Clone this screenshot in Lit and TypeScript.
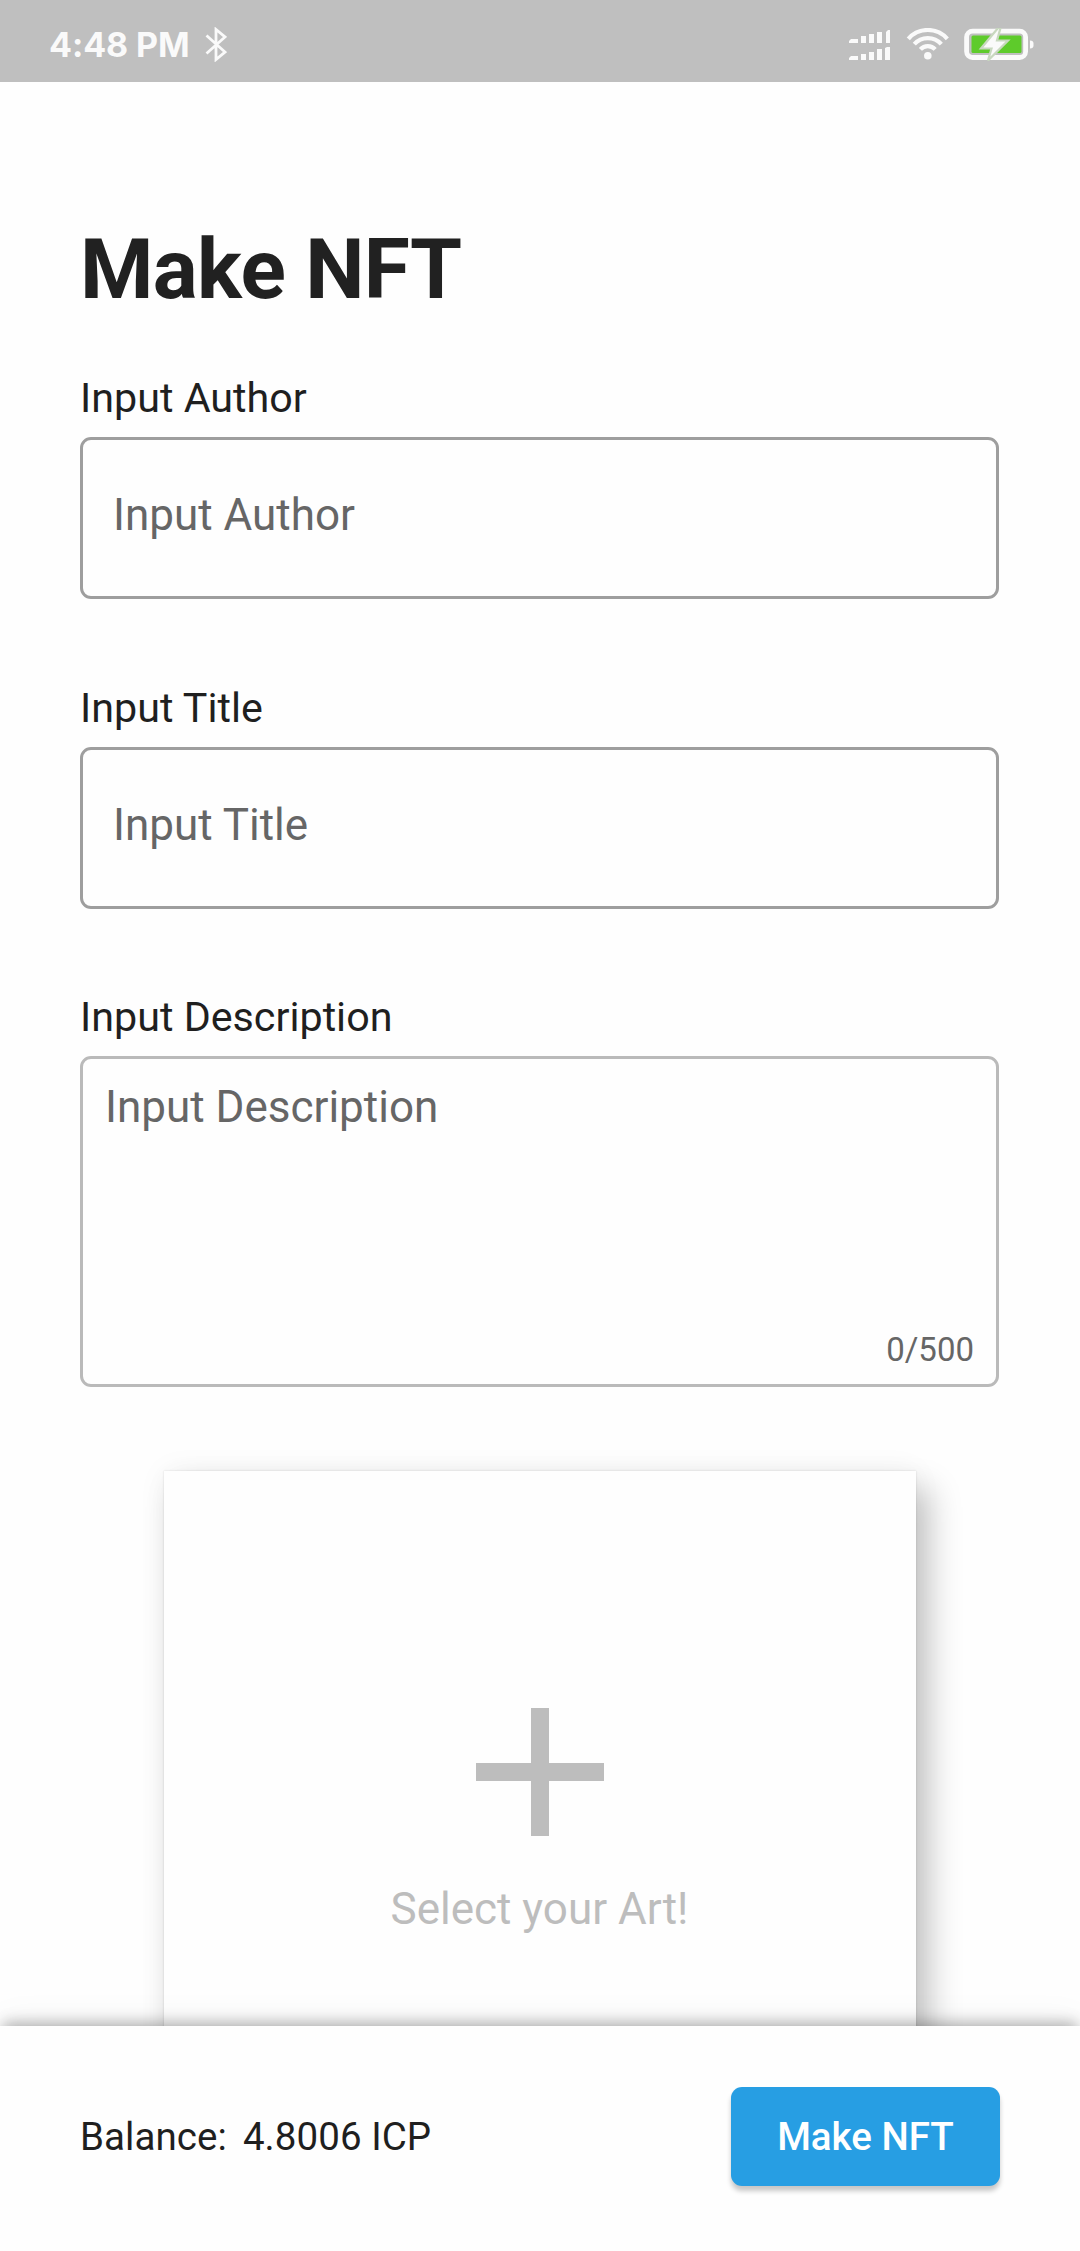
import { LitElement, html, css } from "lit";
import { customElement, property } from "lit/decorators.js";

@customElement("status-bar")
export class StatusBar extends LitElement {
  static styles = css`
    :host {
      display: flex;
      align-items: flex-start;
      height: 82px;
      box-sizing: border-box;
      padding: 25px 46px 0 49px;
      background: #bfbfbf;
      color: #fafafa;
    }
    .time {
      font: 700 34px/40px Inter, "Liberation Sans", sans-serif;
      letter-spacing: -0.1px;
      white-space: nowrap;
    }
    .bluetooth {
      margin: 2px 0 0 15px;
    }
    .system {
      display: flex;
      gap: 14px;
      margin-left: auto;
      margin-top: 3px;
    }
    svg {
      display: block;
    }
  `;

  render() {
    return html`
      <span class="time">4:48 PM</span>
      <svg class="bluetooth" width="22" height="35" viewBox="0 0 22 35" fill="none" stroke="#fafafa" stroke-width="2.8">
        <path d="M1.5 8.5 L20 25 L11 32.5 V2.5 L20 10 L1.5 26.5" />
      </svg>
      <div class="system">
        <svg width="43" height="33" viewBox="0 0 43 33" fill="#fafafa">
          <path d="M0 15v-2l2-2h7v4zM12 15V8h5v7zM20 15V6h5v9zM28 15V4h5v11zM37 15V4l2-2h2v13z" />
          <path d="M0 32v-2l2-2h7v4zM12 32v-6h5v6zM20 32v-8h5v8zM28 32V21h5v11zM36 32V20l2-1h3v13z" />
        </svg>
        <svg width="43" height="33" viewBox="0 0 43 33" fill="none" stroke="#fafafa" stroke-width="4.2">
          <path d="M2.3 10.8 A26 26 0 0 1 41.3 10.8" />
          <path d="M8.3 16.2 A18 18 0 0 1 35.3 16.2" />
          <path d="M14.4 21.4 A10 10 0 0 1 29.2 21.4" />
          <circle cx="21.8" cy="27.8" r="3.8" fill="#fafafa" stroke="none" />
        </svg>
        <svg width="71" height="33" viewBox="0 0 71 33">
          <rect x="3.6" y="3.1" width="59" height="26.4" rx="6" fill="none" stroke="#fafafa" stroke-width="4.8" />
          <rect x="8.5" y="7.5" width="50" height="17.5" rx="1.5" fill="#5ecb2b" />
          <path d="M67 12.5q3.5 0 3.5 3v2q0 3-3.5 3z" fill="#fafafa" />
          <path
            d="M35 0 L18 20.5 H28.5 L25 32.5 L45 12.5 H34 L37.5 0 Z"
            fill="#fafafa"
            stroke="#c8d8bf"
            stroke-width="2.2"
          />
        </svg>
      </div>
    `;
  }
}

@customElement("text-field")
export class TextField extends LitElement {
  @property() label = "";
  @property({ type: Number }) limit = 0;

  static styles = css`
    :host {
      display: block;
    }
    .label {
      font-size: 41.25px;
      line-height: 48px;
      color: #1f1f1f;
      margin-bottom: 15px;
    }
    .box {
      box-sizing: border-box;
      height: 162px;
      border: 3px solid #9e9e9e;
      border-radius: 11px;
      padding: 49px 30px 0;
      font-size: 44px;
      line-height: 52px;
      color: #666;
    }
    .area {
      display: flex;
      flex-direction: column;
      justify-content: space-between;
      height: 331px;
      border-color: #bababa;
      padding: 22px 22px 14px;
    }
    .counter {
      align-self: flex-end;
      font-size: 33px;
      line-height: 40px;
    }
  `;

  render() {
    return html`
      <div class="label">${this.label}</div>
      ${this.limit
        ? html`<div class="box area">
            <span>${this.label}</span>
            <span class="counter">0/${this.limit}</span>
          </div>`
        : html`<div class="box">${this.label}</div>`}
    `;
  }
}

@customElement("app-root")
export class AppRoot extends LitElement {
  static styles = css`
    :host {
      display: flex;
      flex-direction: column;
      height: 2251px;
      overflow: hidden;
      background: #fefefe;
      font-family: Roboto, "Liberation Sans", sans-serif;
    }
    .content {
      flex: 1;
      min-height: 0;
      overflow: hidden;
      padding: 138px 81px 0 80px;
    }
    .title {
      margin: 0 0 54px;
      font-size: 84px;
      line-height: 100px;
      font-weight: 700;
      letter-spacing: -0.7px;
      color: #212121;
    }
    .fields {
      display: flex;
      flex-direction: column;
      gap: 84.5px;
    }
    .art {
      display: flex;
      flex-direction: column;
      align-items: center;
      box-sizing: border-box;
      width: 752px;
      height: 752px;
      margin: 84px auto 0;
      padding-top: 237px;
      background: #fefefe;
      color: #bdbdbd;
      font-size: 44px;
      line-height: 52px;
      box-shadow:
        14px 18px 30px rgba(0, 0, 0, 0.22),
        0 0 28px rgba(0, 0, 0, 0.05),
        0 0 2px rgba(0, 0, 0, 0.14);
    }
    .plus {
      display: block;
      margin-bottom: 47px;
    }
    .footer {
      position: relative;
      display: flex;
      align-items: center;
      justify-content: space-between;
      box-sizing: border-box;
      height: 225px;
      padding: 0 80px 4px;
      background: #fefefe;
      box-shadow:
        0 -6px 14px -3px rgba(0, 0, 0, 0.3),
        0 -4px 36px rgba(0, 0, 0, 0.05);
      font-size: 38.5px;
      color: #1f1f1f;
    }
    .balance {
      display: flex;
      gap: 16px;
      letter-spacing: 0.06px;
    }
    .submit {
      box-sizing: border-box;
      width: 269px;
      height: 99px;
      border: 0;
      border-radius: 11px;
      background: #279ee3;
      color: #fff;
      font: 500 38.5px/46px Roboto, "Liberation Sans", sans-serif;
      box-shadow: 0 5px 5px rgba(0, 0, 0, 0.22);
    }
  `;

  render() {
    return html`
      <status-bar></status-bar>
      <main class="content">
        <h1 class="title">Make NFT</h1>
        <div class="fields">
          <text-field label="Input Author"></text-field>
          <text-field label="Input Title"></text-field>
          <text-field label="Input Description" limit="500"></text-field>
        </div>
        <div class="art">
          <svg class="plus" width="128" height="128" viewBox="0 0 128 128" fill="#bdbdbd">
            <path d="M55 0h18v55h55v18H73v55H55V73H0V55h55z" />
          </svg>
          <span>Select your Art!</span>
        </div>
      </main>
      <footer class="footer">
        <div class="balance"><span>Balance:</span><span>4.8006 ICP</span></div>
        <button class="submit">Make NFT</button>
      </footer>
    `;
  }
}
